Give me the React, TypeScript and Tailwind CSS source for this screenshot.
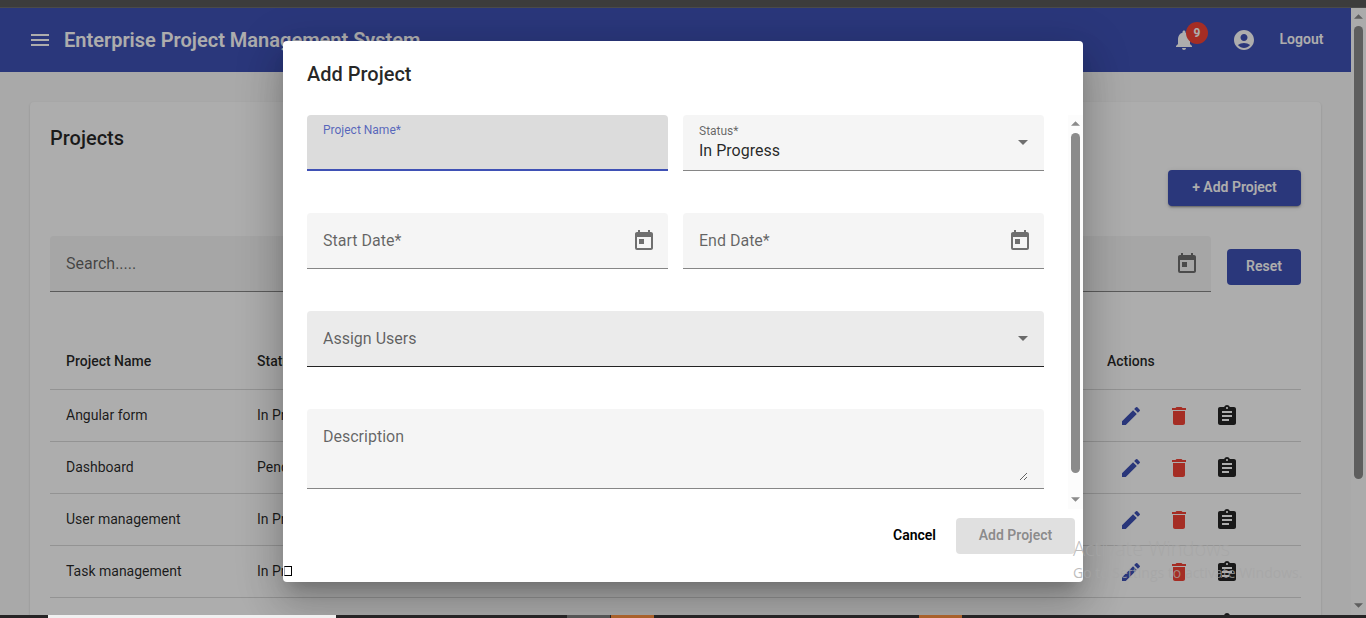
import type { ReactNode } from 'react';
import {
  MdAccountCircle,
  MdAssignment,
  MdDelete,
  MdEdit,
  MdMenu,
  MdNotifications,
  MdToday,
} from 'react-icons/md';

const projects = [
  { name: 'Angular form', status: 'In Progress' },
  { name: 'Dashboard', status: 'Pending' },
  { name: 'User management', status: 'In Progress' },
  { name: 'Task management', status: 'In Progress' },
  { name: '', status: '' },
];

function Arrow({ down = false, className }: { down?: boolean; className: string }) {
  return (
    <svg viewBox="0 0 10 5" className={className} fill="currentColor" aria-hidden="true">
      <path d={down ? 'M0 0h10L5 5z' : 'M0 5h10L5 0z'} />
    </svg>
  );
}

function ScrollBar({ children }: { children: ReactNode }) {
  return (
    <div
      aria-hidden="true"
      className="flex w-[15px] shrink-0 flex-col items-center bg-[#fcfcfc] text-[#8b8b8b]"
    >
      <Arrow className="my-1.5 h-[5px] w-[9px] shrink-0" />
      <div className="flex min-h-0 w-full flex-1 flex-col items-center">{children}</div>
      <Arrow down className="mb-[7px] mt-1.5 h-[5px] w-[9px] shrink-0" />
    </div>
  );
}

function DateField({ label }: { label: string }) {
  return (
    <div className="flex h-14 items-center rounded-t border-b border-black/45 bg-[#f5f5f5] pl-4 pr-3">
      <input
        type="text"
        aria-label={label}
        placeholder={label}
        className="min-w-0 flex-1 bg-transparent text-base text-black/85 outline-none placeholder:text-black/60"
      />
      <button type="button" aria-label="Open calendar" className="text-black/55">
        <MdToday className="size-6" />
      </button>
    </div>
  );
}

function Toolbar() {
  return (
    <header className="flex h-16 shrink-0 items-center bg-[#3f51b5] pl-7 pr-6 text-white">
      <button type="button" aria-label="Menu">
        <MdMenu className="size-6" />
      </button>
      <h1 className="ml-3 flex-1 text-xl font-semibold">Enterprise Project Management System</h1>
      <button type="button" aria-label="Notifications" className="relative">
        <MdNotifications className="size-6" />
        <span className="absolute -right-3 -top-1.5 flex size-[22px] items-center justify-center rounded-full bg-[#f44336] text-xs font-bold">
          9
        </span>
      </button>
      <button type="button" aria-label="Account" className="ml-9">
        <MdAccountCircle className="size-6" />
      </button>
      <button type="button" className="ml-5 w-[51px] pb-0.5 text-center text-sm font-semibold">
        Logout
      </button>
    </header>
  );
}

function ProjectsCard() {
  return (
    <section className="rounded bg-white p-5 shadow-[0_2px_1px_-1px_rgba(0,0,0,0.2),0_1px_1px_rgba(0,0,0,0.14),0_1px_3px_rgba(0,0,0,0.12)]">
      <h2 className="text-xl/8 font-medium text-black/85">Projects</h2>
      <div className="mt-4 flex justify-end">
        <button
          type="button"
          className="h-9 w-[133px] rounded bg-[#3f51b5] pb-0.5 text-sm font-semibold text-white shadow-[0_3px_1px_-2px_rgba(0,0,0,0.2),0_2px_2px_rgba(0,0,0,0.14),0_1px_5px_rgba(0,0,0,0.12)]"
        >
          + Add Project
        </button>
      </div>
      <div className="mt-[30px] flex items-center gap-4">
        <input
          type="text"
          aria-label="Search"
          placeholder="Search....."
          className="h-14 min-w-0 flex-1 rounded-t border-b border-black/45 bg-[#f5f5f5] px-4 text-base outline-none placeholder:text-black/60"
        />
        <div className="flex h-14 min-w-0 flex-1 items-center justify-end rounded-t border-b border-black/45 bg-[#f5f5f5] px-3">
          <button type="button" aria-label="Open calendar" className="text-black/55">
            <MdToday className="size-6" />
          </button>
        </div>
        <button
          type="button"
          className="mt-1.5 h-9 w-[74px] rounded bg-[#3f51b5] pb-0.5 text-sm font-semibold text-white"
        >
          Reset
        </button>
      </div>
      <table className="mt-[41px] w-full table-fixed border-collapse text-left text-sm text-black/85">
        <colgroup>
          <col className="w-[191px]" />
          <col />
          <col className="w-[210px]" />
        </colgroup>
        <thead>
          <tr className="h-14 border-b border-black/15">
            <th className="px-4 font-medium">Project Name</th>
            <th className="px-4 font-medium">Status</th>
            <th className="px-4 font-medium">Actions</th>
          </tr>
        </thead>
        <tbody>
          {projects.map((project, i) => (
            <tr key={i} className="h-[52px] border-b border-black/15">
              <td className="px-4">{project.name}</td>
              <td className="px-4">{project.status}</td>
              <td className="px-4">
                <div className="flex pt-px">
                  <button
                    type="button"
                    aria-label="Edit"
                    className="flex h-12 w-12 items-center justify-center text-[#3f51b5]"
                  >
                    <MdEdit className="size-6" />
                  </button>
                  <button
                    type="button"
                    aria-label="Delete"
                    className="flex h-12 w-12 items-center justify-center text-[#f44336]"
                  >
                    <MdDelete className="size-6" />
                  </button>
                  <button
                    type="button"
                    aria-label="Tasks"
                    className="flex h-12 w-12 items-center justify-center"
                  >
                    <MdAssignment className="size-6" />
                  </button>
                </div>
              </td>
            </tr>
          ))}
        </tbody>
      </table>
    </section>
  );
}

function AddProjectDialog() {
  return (
    <div
      role="dialog"
      aria-labelledby="dialog-title"
      className="w-full max-w-[800px] overflow-hidden rounded bg-white shadow-[0_11px_15px_-7px_rgba(0,0,0,0.2),0_24px_38px_3px_rgba(0,0,0,0.14),0_9px_46px_8px_rgba(0,0,0,0.12)]"
    >
      <h2 id="dialog-title" className="px-6 pb-[25px] pt-[17px] text-xl/8 font-medium text-black/85">
        Add Project
      </h2>
      <div className="flex">
        <form className="grid flex-1 grid-cols-2 gap-x-[15px] gap-y-[42px] px-6 pb-5">
          <div className="flex h-14 flex-col rounded-t border-b-2 border-[#3f51b5] bg-[#dcdcdc] px-4 pt-[7px]">
            <label htmlFor="project-name" className="text-xs/4 text-[#3f51b5]/85">
              Project Name*
            </label>
            <input id="project-name" type="text" className="h-6 bg-transparent text-base outline-none" />
          </div>
          <div className="flex h-14 items-center rounded-t border-b border-black/45 bg-[#f5f5f5] px-4">
            <div className="flex flex-1 flex-col">
              <label htmlFor="status" className="text-xs/4 text-black/60">
                Status*
              </label>
              <select
                id="status"
                className="h-6 appearance-none bg-transparent text-base text-black/85 outline-none"
              >
                <option>In Progress</option>
              </select>
            </div>
            <Arrow down className="h-[5px] w-[10px] text-black/55" />
          </div>
          <DateField label="Start Date*" />
          <DateField label="End Date*" />
          <div className="col-span-2 flex h-14 items-center rounded-t border-b border-black/85 bg-[#ebebeb] px-4">
            <select
              aria-label="Assign Users"
              className="h-6 flex-1 appearance-none bg-transparent text-base text-black/60 outline-none"
            >
              <option>Assign Users</option>
            </select>
            <Arrow down className="h-[5px] w-[10px] text-black/55" />
          </div>
          <div className="col-span-2 flex h-20 rounded-t border-b border-black/45 bg-[#f5f5f5] px-4 pb-[7px] pt-4">
            <textarea
              aria-label="Description"
              placeholder="Description"
              className="h-full flex-1 resize-y bg-transparent text-base outline-none placeholder:text-black/60"
            />
          </div>
        </form>
        <ScrollBar>
          <div className="mt-px w-[9px] flex-[340] rounded-full bg-[#8b8b8b]" />
          <div className="flex-[18]" />
        </ScrollBar>
      </div>
      <div className="flex justify-end gap-4 pb-3 pr-2 pt-[9px]">
        <button type="button" className="w-[51px] pb-0.5 text-sm font-semibold text-black">
          Cancel
        </button>
        <button
          type="button"
          disabled
          className="h-9 w-[119px] rounded bg-black/12 pb-0.5 text-sm font-semibold text-black/40"
        >
          Add Project
        </button>
      </div>
      <div className="pb-1.5 pl-px">
        <div className="h-2.5 w-2 border border-black border-l-gray-400" />
      </div>
    </div>
  );
}

export default function App() {
  return (
    <div className="flex h-screen flex-col overflow-hidden font-['Roboto',sans-serif]">
      <div className="h-2 shrink-0 border-b border-[#4a4a4a] bg-[#3c3c3c]" />
      <div className="relative flex min-h-0 flex-1 overflow-hidden">
        <div className="flex min-w-0 flex-1 flex-col bg-[#fafafa]">
          <Toolbar />
          <main className="min-h-0 flex-1 overflow-hidden p-[30px]">
            <ProjectsCard />
          </main>
        </div>
        <ScrollBar>
          <div className="mt-px w-[9px] flex-[454] rounded-full bg-[#8b8b8b]" />
          <div className="flex-[118]" />
        </ScrollBar>
        <div className="absolute inset-0 flex items-center justify-center bg-black/32">
          <AddProjectDialog />
        </div>
        <div className="pointer-events-none absolute bottom-8 right-[57px] w-[236px] whitespace-nowrap font-['Open_Sans',sans-serif] text-[#a6a6a6]/75">
          <p className="text-xl/7 font-light">Activate Windows</p>
          <p className="text-sm/5">Go to Settings to activate Windows.</p>
        </div>
      </div>
      <div className="flex h-[3px] shrink-0 bg-[#262425]">
        <div className="ml-12 w-72 bg-[#f0f0f0]" />
        <div className="ml-[231px] w-[43px] bg-[#555555]" />
        <div className="ml-px w-[43px] bg-[#a9612b]" />
        <div className="ml-[265px] w-[43px] bg-[#a9612b]" />
      </div>
    </div>
  );
}
